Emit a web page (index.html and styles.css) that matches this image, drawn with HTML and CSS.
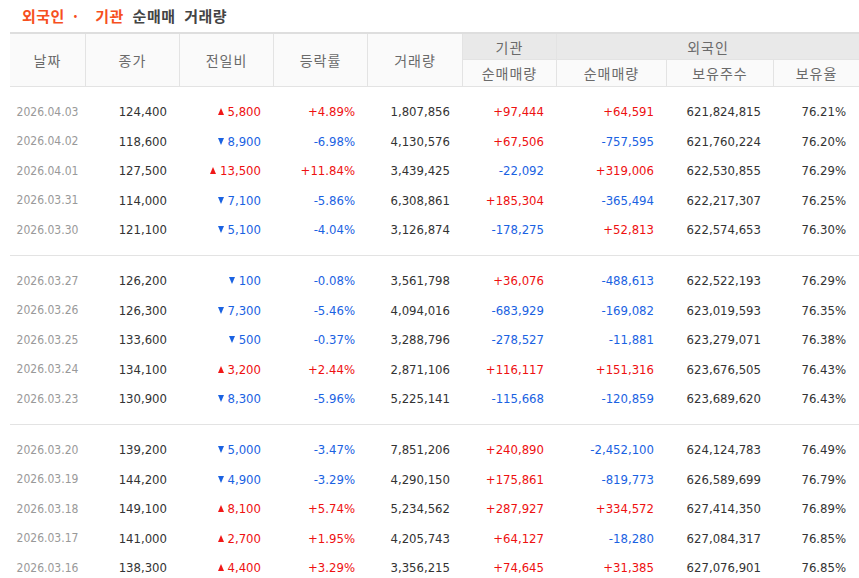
FILE: index.html
```html
<!DOCTYPE html>
<html lang="ko">
<head>
<meta charset="utf-8">
<title>외국인 · 기관 순매매 거래량</title>
<link rel="stylesheet" href="styles.css">
</head>
<body>
<div class="wrap">
  <h2 class="title"><span class="hl">외국인<span class="dot">·</span>기관</span> 순매매 거래량</h2>
  <table class="trade">
    <colgroup>
      <col class="c1"><col class="c2"><col class="c3"><col class="c4"><col class="c5"><col class="c6"><col class="c7"><col class="c8"><col class="c9">
    </colgroup>
    <thead>
      <tr class="h1">
        <th rowspan="2" class="first">날짜</th>
        <th rowspan="2">종가</th>
        <th rowspan="2">전일비</th>
        <th rowspan="2">등락률</th>
        <th rowspan="2">거래량</th>
        <th class="grp">기관</th>
        <th colspan="3" class="grp">외국인</th>
      </tr>
      <tr class="h2">
        <th>순매매량</th>
        <th>순매매량</th>
        <th>보유주수</th>
        <th>보유율</th>
      </tr>
    </thead>
    <tbody>
      <tr class="pad top0"><td colspan="9"></td></tr>
      <tr><td class="date">2026.04.03</td><td>124,400</td><td class="r"><span class="up"></span>5,800</td><td class="r">+4.89%</td><td>1,807,856</td><td class="r">+97,444</td><td class="r">+64,591</td><td>621,824,815</td><td class="last">76.21%</td></tr>
      <tr><td class="date">2026.04.02</td><td>118,600</td><td class="b"><span class="dn"></span>8,900</td><td class="b">-6.98%</td><td>4,130,576</td><td class="r">+67,506</td><td class="b">-757,595</td><td>621,760,224</td><td class="last">76.20%</td></tr>
      <tr><td class="date">2026.04.01</td><td>127,500</td><td class="r"><span class="up"></span>13,500</td><td class="r">+11.84%</td><td>3,439,425</td><td class="b">-22,092</td><td class="r">+319,006</td><td>622,530,855</td><td class="last">76.29%</td></tr>
      <tr><td class="date">2026.03.31</td><td>114,000</td><td class="b"><span class="dn"></span>7,100</td><td class="b">-5.86%</td><td>6,308,861</td><td class="r">+185,304</td><td class="b">-365,494</td><td>622,217,307</td><td class="last">76.25%</td></tr>
      <tr><td class="date">2026.03.30</td><td>121,100</td><td class="b"><span class="dn"></span>5,100</td><td class="b">-4.04%</td><td>3,126,874</td><td class="b">-178,275</td><td class="r">+52,813</td><td>622,574,653</td><td class="last">76.30%</td></tr>
      <tr class="pad end"><td colspan="9"></td></tr>

      <tr class="pad"><td colspan="9"></td></tr>
      <tr><td class="date">2026.03.27</td><td>126,200</td><td class="b"><span class="dn"></span>100</td><td class="b">-0.08%</td><td>3,561,798</td><td class="r">+36,076</td><td class="b">-488,613</td><td>622,522,193</td><td class="last">76.29%</td></tr>
      <tr><td class="date">2026.03.26</td><td>126,300</td><td class="b"><span class="dn"></span>7,300</td><td class="b">-5.46%</td><td>4,094,016</td><td class="b">-683,929</td><td class="b">-169,082</td><td>623,019,593</td><td class="last">76.35%</td></tr>
      <tr><td class="date">2026.03.25</td><td>133,600</td><td class="b"><span class="dn"></span>500</td><td class="b">-0.37%</td><td>3,288,796</td><td class="b">-278,527</td><td class="b">-11,881</td><td>623,279,071</td><td class="last">76.38%</td></tr>
      <tr><td class="date">2026.03.24</td><td>134,100</td><td class="r"><span class="up"></span>3,200</td><td class="r">+2.44%</td><td>2,871,106</td><td class="r">+116,117</td><td class="r">+151,316</td><td>623,676,505</td><td class="last">76.43%</td></tr>
      <tr><td class="date">2026.03.23</td><td>130,900</td><td class="b"><span class="dn"></span>8,300</td><td class="b">-5.96%</td><td>5,225,141</td><td class="b">-115,668</td><td class="b">-120,859</td><td>623,689,620</td><td class="last">76.43%</td></tr>
      <tr class="pad end"><td colspan="9"></td></tr>

      <tr class="pad"><td colspan="9"></td></tr>
      <tr><td class="date">2026.03.20</td><td>139,200</td><td class="b"><span class="dn"></span>5,000</td><td class="b">-3.47%</td><td>7,851,206</td><td class="r">+240,890</td><td class="b">-2,452,100</td><td>624,124,783</td><td class="last">76.49%</td></tr>
      <tr><td class="date">2026.03.19</td><td>144,200</td><td class="b"><span class="dn"></span>4,900</td><td class="b">-3.29%</td><td>4,290,150</td><td class="r">+175,861</td><td class="b">-819,773</td><td>626,589,699</td><td class="last">76.79%</td></tr>
      <tr><td class="date">2026.03.18</td><td>149,100</td><td class="r"><span class="up"></span>8,100</td><td class="r">+5.74%</td><td>5,234,562</td><td class="r">+287,927</td><td class="r">+334,572</td><td>627,414,350</td><td class="last">76.89%</td></tr>
      <tr><td class="date">2026.03.17</td><td>141,000</td><td class="r"><span class="up"></span>2,700</td><td class="r">+1.95%</td><td>4,205,743</td><td class="r">+64,127</td><td class="b">-18,280</td><td>627,084,317</td><td class="last">76.85%</td></tr>
      <tr><td class="date">2026.03.16</td><td>138,300</td><td class="r"><span class="up"></span>4,400</td><td class="r">+3.29%</td><td>3,356,215</td><td class="r">+74,645</td><td class="r">+31,385</td><td>627,076,901</td><td class="last">76.85%</td></tr>
      <tr class="pad end"><td colspan="9"></td></tr>
    </tbody>
  </table>
</div>
</body>
</html>
```

FILE: styles.css
```css
html, body {
  margin: 0;
  padding: 0;
  background: #fff;
}

body {
  overflow: hidden;
}

.wrap {
  padding-left: 10px;
}

.title {
  margin: 0;
  height: 32px;
  padding-left: 12px;
  font-family: "Noto Sans CJK KR", sans-serif;
  font-size: 15px;
  font-weight: bold;
  line-height: 31px;
  color: #444;
  letter-spacing: 0.5px;
  word-spacing: 4px;
}

.title .hl {
  color: #f6501e;
}

.title .dot {
  display: inline-block;
  margin: 0 17px 0 8px;
}

.trade {
  width: 849px;
  table-layout: fixed;
  border-collapse: separate;
  border-spacing: 0;
  border-top: 2px solid #dedede;
}

.c1 { width: 75px; }
.c2 { width: 94px; }
.c3 { width: 94px; }
.c4 { width: 94px; }
.c5 { width: 95px; }
.c6 { width: 94px; }
.c7 { width: 110px; }
.c8 { width: 107px; }
.c9 { width: 86px; }

.trade th {
  padding: 0;
  background: #fafafa;
  border-left: 1px solid #e3e3e3;
  border-bottom: 1px solid #e3e3e3;
  font-family: "Noto Sans CJK KR", sans-serif;
  font-size: 14px;
  font-weight: normal;
  color: #6a6a6a;
  letter-spacing: 1px;
  text-align: center;
  vertical-align: middle;
}

.trade th.first {
  border-left: 0;
}

.trade th.grp {
  background: #e9e9e9;
}

.trade tr.h1 {
  height: 26px;
}

.trade tr.h2 {
  height: 27px;
}

.trade td {
  height: 29.5px;
  padding: 0 12px 0 0;
  font-family: "DejaVu Sans Condensed", "DejaVu Sans", "Liberation Sans", sans-serif;
  font-stretch: condensed;
  font-size: 13px;
  color: #333;
  text-align: right;
  vertical-align: middle;
  white-space: nowrap;
}

.trade td.date {
  padding: 0;
  text-align: center;
  font-size: 12px;
  color: #999;
}

.trade td.last {
  padding-right: 13px;
}

.trade td.r {
  color: #ee1111;
}

.trade td.b {
  color: #1a62e2;
}

.trade tr.pad td {
  height: 10.5px;
  padding: 0;
}

.trade tr.pad.top0 td {
  height: 10px;
}

.trade tr.pad.end td {
  height: 10px;
  border-bottom: 1px solid #e3e3e3;
}

.up, .dn {
  display: inline-block;
  width: 0;
  height: 0;
  margin-right: 4px;
  border-left: 3.5px solid transparent;
  border-right: 3.5px solid transparent;
  vertical-align: 1px;
}

.up {
  border-bottom: 7px solid #f01818;
}

.dn {
  border-top: 7px solid #1a62e2;
}
```
